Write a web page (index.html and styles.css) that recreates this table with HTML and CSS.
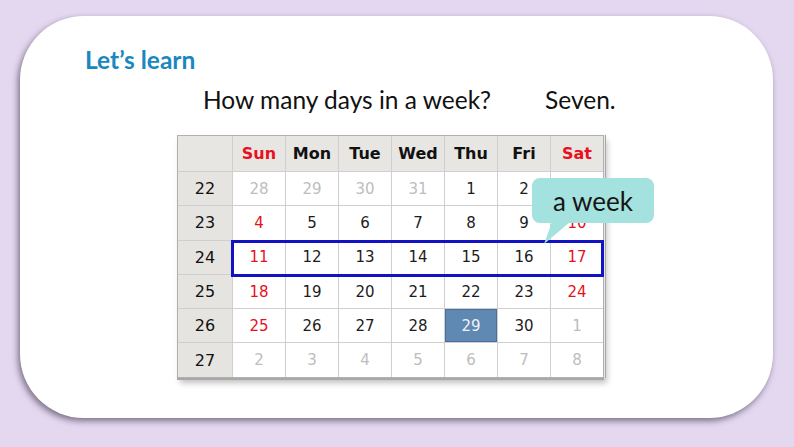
FILE: index.html
```html
<!DOCTYPE html>
<html>
<head>
<meta charset="utf-8">
<link rel="stylesheet" href="styles.css">
</head>
<body>
<div class="card">
  <h1 class="title">Let’s learn</h1>
  <p class="question"><span>How many days in a week?</span><span>Seven.</span></p>
  <div class="cal-wrap">
    <div class="calendar">
      <div class="hd corner"></div>
      <div class="hd red">Sun</div><div class="hd">Mon</div><div class="hd">Tue</div><div class="hd">Wed</div><div class="hd">Thu</div><div class="hd">Fri</div><div class="hd red">Sat</div>

      <div class="wk">22</div>
      <div class="d muted">28</div><div class="d muted">29</div><div class="d muted">30</div><div class="d muted">31</div><div class="d">1</div><div class="d">2</div><div class="d red">3</div>

      <div class="wk">23</div>
      <div class="d red">4</div><div class="d">5</div><div class="d">6</div><div class="d">7</div><div class="d">8</div><div class="d">9</div><div class="d red">10</div>

      <div class="wk">24</div>
      <div class="d red">11</div><div class="d">12</div><div class="d">13</div><div class="d">14</div><div class="d">15</div><div class="d">16</div><div class="d red">17</div>

      <div class="wk">25</div>
      <div class="d red">18</div><div class="d">19</div><div class="d">20</div><div class="d">21</div><div class="d">22</div><div class="d">23</div><div class="d red">24</div>

      <div class="wk">26</div>
      <div class="d red">25</div><div class="d">26</div><div class="d">27</div><div class="d">28</div><div class="d today">29</div><div class="d">30</div><div class="d muted">1</div>

      <div class="wk">27</div>
      <div class="d muted">2</div><div class="d muted">3</div><div class="d muted">4</div><div class="d muted">5</div><div class="d muted">6</div><div class="d muted">7</div><div class="d muted">8</div>
    </div>
    <div class="week-box"></div>
    <div class="callout">
      <span>a week</span>
      <svg class="tail" width="30" height="22" viewBox="0 0 30 22"><polygon points="8,0 26,0 0,22" fill="#a3e2de"/></svg>
    </div>
  </div>
</div>
</body>
</html>
```
FILE: styles.css
```css
* { box-sizing: border-box; }
html, body { margin: 0; }
body {
  width: 794px;
  height: 447px;
  background: #e3d8f0;
  padding: 16px 21px 29px 20px;
  overflow: hidden;
}
.card {
  height: 402px;
  background: #fff;
  border-radius: 64px;
  box-shadow: -2px 3px 6px rgba(40, 30, 50, 0.55);
  padding: 29px 0 0 65px;
}
.title {
  margin: 0;
  font-family: Lato, "Open Sans", sans-serif;
  font-weight: 700;
  font-size: 24.5px;
  line-height: 30px;
  color: #1a88be;
}
.question {
  margin: 10px 0 0 118px;
  font-family: Lato, "Open Sans", sans-serif;
  font-size: 24.5px;
  line-height: 30px;
  color: #111;
  display: flex;
  gap: 54px;
}
.cal-wrap {
  position: relative;
  margin: 20px 0 0 92px;
  width: 427px;
}
.calendar {
  display: grid;
  grid-template-columns: 54px repeat(7, 52px);
  grid-template-rows: 35px repeat(6, 33.3px);
  gap: 1px;
  background: #cfcfcf;
  border: 1px solid #b0b0b0;
  box-shadow: 1px 0 0 #e6e6e6, 2px 0 0 #a8a8a8, 0 2px 0 #a8a8a8, 3px 5px 6px rgba(0,0,0,0.25);
  font-family: "DejaVu Sans", sans-serif;
}
.calendar > div {
  display: flex;
  align-items: center;
  justify-content: center;
  background: #fff;
  font-size: 15px;
  color: #1c1c1c;
}
.calendar > .hd {
  background: #e8e6e3;
  font-weight: 700;
  font-size: 16px;
  color: #111;
}
.calendar > .wk {
  background: #e6e4e0;
  font-size: 16px;
  color: #111;
}
.calendar > .red { color: #e8101c; }
.calendar > .muted { color: #bdbdbd; }
.calendar > .today {
  background: #5f88b2;
  color: #eef2f7;
  box-shadow: inset 0 0 0 1px #4b6f96;
}
.week-box {
  position: absolute;
  left: 54px;
  top: 105px;
  width: 373px;
  height: 37px;
  border: 3px solid #1212c4;
}
.callout {
  position: absolute;
  left: 355px;
  top: 43px;
  width: 122px;
  height: 45px;
  background: #a3e2de;
  border-radius: 8px;
  display: flex;
  align-items: center;
  justify-content: center;
  font-family: Lato, "Open Sans", sans-serif;
  font-size: 26px;
  color: #161616;
}
.tail {
  position: absolute;
  left: 12px;
  top: 44px;
}
```
